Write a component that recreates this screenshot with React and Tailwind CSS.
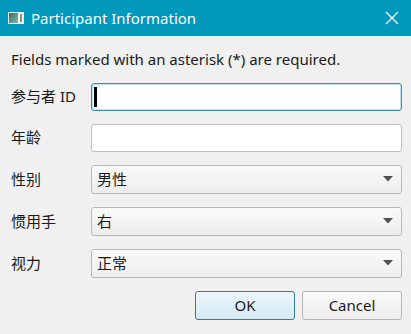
import React from 'react'

const FONT = { fontFamily: '"Noto Sans", "Noto Sans CJK SC", sans-serif' }

function Arrow() {
  return (
    <svg width="10" height="6" viewBox="0 0 10 6" className="shrink-0">
      <path d="M0 0 L10 0 L5 5.5 Z" fill="#505050" />
    </svg>
  )
}

function Combo({ value }) {
  return (
    <div className="flex h-[29px] flex-1 items-center justify-between rounded-[3px] border border-[#b8b8b8] bg-gradient-to-b from-[#fafafa] to-[#ededed] pl-[5px] pr-[8px] text-[15px] text-[#1a1a1a]">
      <span>{value}</span>
      <Arrow />
    </div>
  )
}

function Row({ label, children }) {
  return (
    <div className="flex items-center">
      <div className="w-[80px] text-[15px] text-[#1a1a1a]">{label}</div>
      {children}
    </div>
  )
}

export default function App() {
  return (
    <div className="h-[334px] w-[411px] bg-[#f0f0f0]" style={FONT}>
      {/* Title bar */}
      <div className="flex h-[36px] items-center bg-[#0098bb] pl-[8px] pr-[12px]">
        <div className="flex h-[12px] w-[16px] items-stretch border border-[#e8e8e8] bg-[#f4f4f4]">
          <div className="w-[9px] bg-gradient-to-br from-[#2f6f6a] to-[#8ab8a8]" />
          <div className="flex-1" />
          <div className="my-[1px] mr-[1px] w-[2px] bg-[#8a8a8a]" />
        </div>
        <div className="ml-[7px] flex-1 text-[15px] text-white">Participant Information</div>
        <svg width="14" height="14" viewBox="0 0 14 14">
          <path d="M1 1 L13 13 M13 1 L1 13" stroke="#ffffff" strokeWidth="1.3" />
        </svg>
      </div>

      <div className="pl-[11px] pr-[9px] pt-[12px]">
        <div className="text-[15px] text-[#1a1a1a]">Fields marked with an asterisk (*) are required.</div>

        <div className="mt-[12px] flex flex-col gap-[13px]">
          <Row label="参与者 ID">
            <div className="flex h-[28px] flex-1 items-center rounded-[3px] border border-[#3d8fa8] bg-white pl-[2px] shadow-[inset_0_0_0_1px_#bfe3ef]">
              <div className="h-[20px] w-[3px] bg-black" />
            </div>
          </Row>
          <Row label="年龄">
            <div className="h-[28px] flex-1 rounded-[3px] border border-[#c0c0c0] bg-white" />
          </Row>
          <Row label="性别">
            <Combo value="男性" />
          </Row>
          <Row label="惯用手">
            <Combo value="右" />
          </Row>
          <Row label="视力">
            <Combo value="正常" />
          </Row>
        </div>

        <div className="mt-[13px] flex justify-end gap-[7px]">
          <button className="h-[29px] w-[100px] rounded-[3px] border border-[#2d7f9e] bg-gradient-to-b from-[#eaf6fb] to-[#d6ebf3] text-[15px] text-[#1a1a1a]">
            OK
          </button>
          <button className="h-[29px] w-[100px] rounded-[3px] border border-[#b5b5b5] bg-gradient-to-b from-[#fafafa] to-[#ededed] text-[15px] text-[#1a1a1a]">
            Cancel
          </button>
        </div>
      </div>
    </div>
  )
}
